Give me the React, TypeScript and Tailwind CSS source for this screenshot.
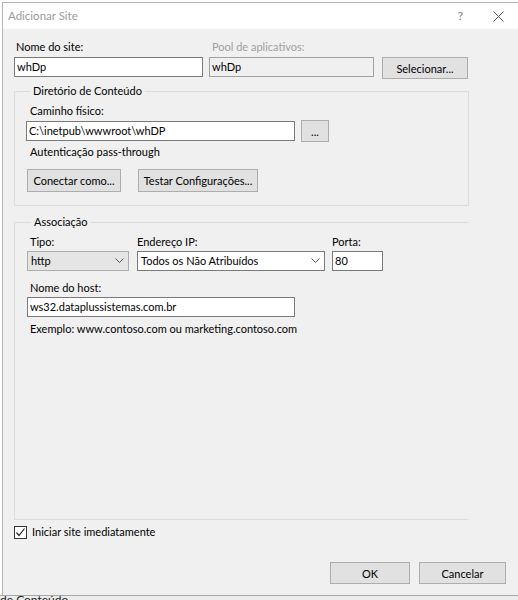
import React from "react";

const font = { fontFamily: 'Lato, "Noto Sans", "Liberation Sans", sans-serif' };

function Chevron() {
  return (
    <svg width="9" height="6" viewBox="0 0 9 6" className="shrink-0">
      <path d="M0.5 0.5 L4.5 4.5 L8.5 0.5" fill="none" stroke="#555" strokeWidth="1" />
    </svg>
  );
}

function Btn({ children, className = "" }: { children: React.ReactNode; className?: string }) {
  return (
    <button
      type="button"
      className={
        "h-[22px] bg-[#e1e1e1] border border-[#adadad] text-[11px] leading-none text-black whitespace-nowrap flex items-center justify-center " +
        className
      }
    >
      {children}
    </button>
  );
}

function Field({ value, className = "" }: { value: string; className?: string }) {
  return (
    <div
      className={
        "h-[20px] bg-white border border-[#7a7a7a] flex items-center px-[2px] text-[11px] text-black whitespace-nowrap overflow-hidden " +
        className
      }
    >
      {value}
    </div>
  );
}

export default function App() {
  return (
    <div className="w-[518px] h-[600px] bg-white overflow-hidden flex flex-col" style={font}>
      <div className="ml-[2px] mt-[2px] border-l border-t border-[#b4b4b4] flex flex-col">
        {/* title bar */}
        <div className="h-[26px] bg-white flex items-center pl-[5px] pr-[14px]">
          <span className="text-[11.5px] text-[#9a9a9a]">Adicionar Site</span>
          <span className="ml-auto text-[12px] text-[#777]">?</span>
          <svg width="11" height="11" viewBox="0 0 11 11" className="ml-[30px]">
            <path d="M0.5 0.5 L10.5 10.5 M10.5 0.5 L0.5 10.5" stroke="#555" strokeWidth="1" />
          </svg>
        </div>

        {/* body */}
        <div className="h-[566px] bg-[#f0f0f0] flex flex-col pl-[11px] pr-[12px] pt-[10px] text-[11px] text-black">
          {/* site name row */}
          <div className="flex items-end">
            <div className="w-[189px] flex flex-col">
              <span className="pl-[2px] leading-[16px] mb-[2px]">Nome do site:</span>
              <Field value="whDp" />
            </div>
            <div className="w-[165px] ml-[6px] flex flex-col">
              <span className="pl-[3px] leading-[16px] mb-[2px] text-[#a0a0a0]">Pool de aplicativos:</span>
              <div className="h-[20px] bg-[#f0f0f0] border border-[#a0a0a0] flex items-center px-[2px]">whDp</div>
            </div>
            <Btn className="w-[86px] ml-[8px] -mb-[2px]">Selecionar...</Btn>
          </div>

          {/* content directory */}
          <fieldset className="w-[455px] mt-[6px] border border-[#dcdcdc] pl-[11px] pb-[13px]">
            <legend className="ml-[4px] px-[3px] leading-[16px]">Diretório de Conteúdo</legend>
            <span className="block pl-[4px] mt-[4px] leading-[16px]">Caminho físico:</span>
            <div className="flex items-center mt-[1px]">
              <Field value="C:\inetpub\wwwroot\whDP" className="w-[269px]" />
              <Btn className="w-[28px] ml-[6px] text-[10px]">...</Btn>
            </div>
            <span className="block pl-[4px] mt-[2px] leading-[16px]">Autenticação pass-through</span>
            <div className="flex mt-[9px]">
              <Btn className="w-[94px] h-[23px] ml-[1px]">Conectar como...</Btn>
              <Btn className="w-[120px] h-[23px] ml-[17px]">Testar Configurações...</Btn>
            </div>
          </fieldset>

          {/* binding */}
          <fieldset className="w-[455px] h-[306px] mt-[8px] border border-[#dcdcdc] border-r-transparent pl-[12px]">
            <legend className="ml-[4px] px-[3px] leading-[16px]">Associação</legend>
            <div className="flex mt-[4px]">
              <div className="w-[102px] flex flex-col">
                <span className="pl-[3px] leading-[16px] mb-[1px]">Tipo:</span>
                <div className="h-[20px] bg-[#e5e5e5] border border-[#adadad] flex items-center pl-[3px] pr-[4px]">
                  <span>http</span>
                  <span className="ml-auto">
                    <Chevron />
                  </span>
                </div>
              </div>
              <div className="w-[188px] ml-[8px] flex flex-col">
                <span className="leading-[16px] mb-[1px]">Endereço IP:</span>
                <div className="h-[20px] bg-white border border-[#7a7a7a] flex items-center pl-[3px] pr-[4px]">
                  <span>Todos os Não Atribuídos</span>
                  <span className="ml-auto">
                    <Chevron />
                  </span>
                </div>
              </div>
              <div className="w-[51px] ml-[7px] flex flex-col">
                <span className="leading-[16px] mb-[1px]">Porta:</span>
                <Field value="80" />
              </div>
            </div>
            <span className="block pl-[3px] mt-[9px] leading-[16px]">Nome do host:</span>
            <Field value="ws32.dataplussistemas.com.br" className="w-[268px] mt-[1px]" />
            <span className="block pl-[3px] mt-[4px] leading-[16px]">Exemplo: www.contoso.com ou marketing.contoso.com</span>
          </fieldset>

          {/* start now */}
          <label className="flex items-center mt-[4px]">
            <span className="w-[13px] h-[13px] bg-white border border-[#333] flex items-center justify-center">
              <svg width="11" height="11" viewBox="0 0 11 11">
                <path d="M1.5 5.5 L4 8.5 L9.5 1.5" fill="none" stroke="#222" strokeWidth="1.2" />
              </svg>
            </span>
            <span className="ml-[5px] leading-[16px]">Iniciar site imediatamente</span>
          </label>

          <div className="mt-auto mb-[11px] flex justify-end">
            <Btn className="w-[80px] border-[#0078d7] border-[1.5px]">OK</Btn>
            <Btn className="w-[87px] ml-[9px]">Cancelar</Btn>
          </div>
        </div>
      </div>

      {/* window behind */}
      <div className="flex-1 border-t border-[#a8a8a8] bg-[#ececec] overflow-hidden">
        <span className="block -mt-[4px] text-[12px] leading-[16px] text-[#222]">de Conteúdo</span>
      </div>
    </div>
  );
}
